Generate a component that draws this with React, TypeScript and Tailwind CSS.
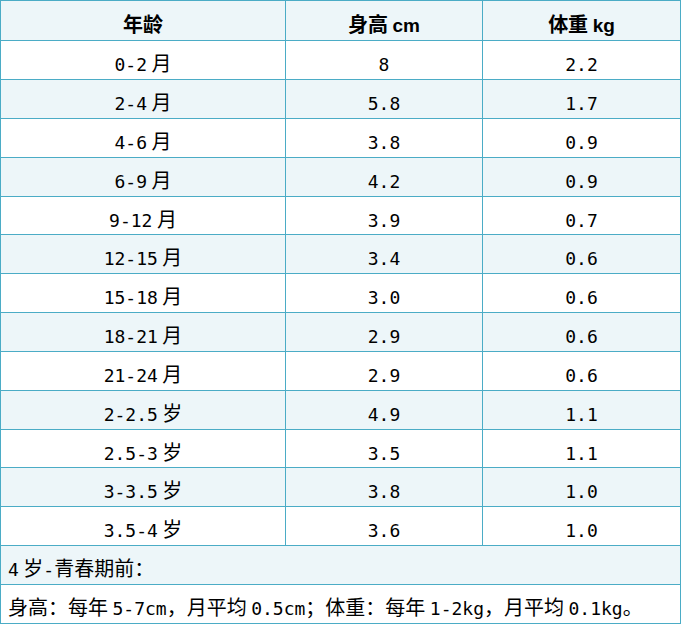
import React from 'react'

type Row = { age: string; height: string; weight: string; h: string }

const rows: Row[] = [
  { age: '0-2 月', height: '8', weight: '2.2', h: 'h-[39px]' },
  { age: '2-4 月', height: '5.8', weight: '1.7', h: 'h-[39px]' },
  { age: '4-6 月', height: '3.8', weight: '0.9', h: 'h-[39px]' },
  { age: '6-9 月', height: '4.2', weight: '0.9', h: 'h-[39px]' },
  { age: '9-12 月', height: '3.9', weight: '0.7', h: 'h-[38px]' },
  { age: '12-15 月', height: '3.4', weight: '0.6', h: 'h-[39px]' },
  { age: '15-18 月', height: '3.0', weight: '0.6', h: 'h-[39px]' },
  { age: '18-21 月', height: '2.9', weight: '0.6', h: 'h-[39px]' },
  { age: '21-24 月', height: '2.9', weight: '0.6', h: 'h-[39px]' },
  { age: '2-2.5 岁', height: '4.9', weight: '1.1', h: 'h-[39px]' },
  { age: '2.5-3 岁', height: '3.5', weight: '1.1', h: 'h-[38px]' },
  { age: '3-3.5 岁', height: '3.8', weight: '1.0', h: 'h-[39px]' },
  { age: '3.5-4 岁', height: '3.6', weight: '1.0', h: 'h-[39px]' },
]

const bodyLatin = "font-['DejaVu_Sans_Mono',monospace] text-[18px]"
const headLatin = "font-['Liberation_Sans',sans-serif] text-[19px]"

// ASCII runs get a narrower font so digits look like the original half-width ones
function Mixed({ text, latin }: { text: string; latin: string }) {
  const parts = text.split(/([!-~]+)/)
  return (
    <span className="whitespace-pre">
      {parts.map((p, i) =>
        i % 2 ? (
          <span key={i} className={latin}>
            {p}
          </span>
        ) : (
          p
        ),
      )}
    </span>
  )
}

const cell = 'flex items-center justify-center pt-[7px] border-r border-b border-[#4bacc6] leading-none'

export default function App() {
  return (
    <div className="bg-white w-[681px] h-[625px] text-black font-['Noto_Sans_CJK_SC',sans-serif] text-[20px]">
      <div className="grid grid-cols-[285px_197px_198px] border-l border-t border-[#4bacc6]">
        {/* header */}
        <div className={`${cell} h-[40px] bg-[#edf6f9] font-bold`}>年龄</div>
        <div className={`${cell} h-[40px] bg-[#edf6f9] font-bold`}>
          <Mixed text="身高 cm" latin={headLatin} />
        </div>
        <div className={`${cell} h-[40px] bg-[#edf6f9] font-bold`}>
          <Mixed text="体重 kg" latin={headLatin} />
        </div>

        {rows.map((r, i) => {
          const bg = i % 2 ? 'bg-[#edf6f9]' : 'bg-white'
          return (
            <React.Fragment key={r.age}>
              <div className={`${cell} ${r.h} ${bg}`}>
                <Mixed text={r.age} latin={bodyLatin} />
              </div>
              <div className={`${cell} ${r.h} ${bg}`}>
                <Mixed text={r.height} latin={bodyLatin} />
              </div>
              <div className={`${cell} ${r.h} ${bg}`}>
                <Mixed text={r.weight} latin={bodyLatin} />
              </div>
            </React.Fragment>
          )
        })}

        <div className="col-span-3 h-[39px] flex items-center pl-[7px] pt-[7px] leading-none bg-[#edf6f9] border-r border-b border-[#4bacc6]">
          <Mixed text="4 岁-青春期前：" latin={bodyLatin} />
        </div>
        <div className="col-span-3 h-[39px] flex items-center pl-[7px] pt-[7px] leading-none bg-white border-r border-b border-[#4bacc6]">
          <Mixed text="身高：每年 5-7cm，月平均 0.5cm；体重：每年 1-2kg，月平均 0.1kg。" latin={bodyLatin} />
        </div>
      </div>
    </div>
  )
}
